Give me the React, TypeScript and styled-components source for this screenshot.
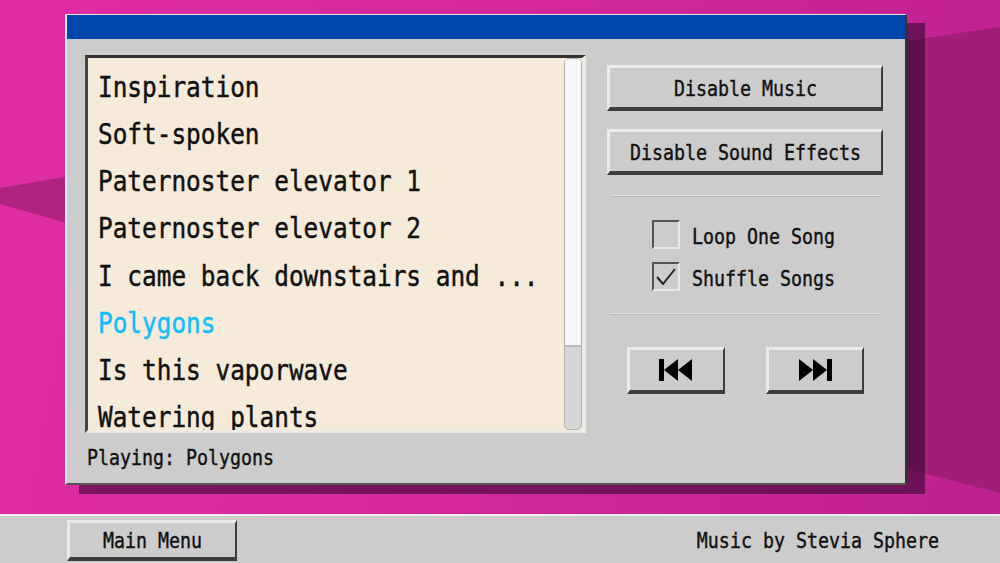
import React from 'react';
import styled, { createGlobalStyle, css } from 'styled-components';

const SONGS = [
  'Inspiration',
  'Soft-spoken',
  'Paternoster elevator 1',
  'Paternoster elevator 2',
  'I came back downstairs and ...',
  'Polygons',
  'Is this vaporwave',
  'Watering plants',
];
const PLAYING = 'Polygons';

const GlobalStyle = createGlobalStyle`
  html, body {
    margin: 0;
    padding: 0;
    height: 100%;
    overflow: hidden;
  }
  body {
    font-family: "DejaVu Sans Mono", "Liberation Mono", monospace;
    color: #111;
  }
`;

/* the game font is a tall pixel face, so stretch the mono a bit */
const tallText = css`
  display: inline-block;
  transform: scaleY(1.16);
  -webkit-text-stroke: 0.35px currentColor;
`;

const Page = styled.div`
  position: relative;
  display: flex;
  flex-direction: column;
  width: 1000px;
  height: 563px;
  overflow: hidden;
  background: linear-gradient(100deg, #e02da5 0%, #d2279b 55%, #bd2091 100%);
`;

const Backdrop = styled.svg`
  position: absolute;
  inset: 0;
  width: 1000px;
  height: 563px;
`;

const Stage = styled.main`
  position: relative;
  flex: 1;
  padding: 14px 93px 0 65px;
`;

const WinStack = styled.div`
  position: relative;
  z-index: 0;
`;

const Win = styled.section`
  position: relative;
  box-sizing: border-box;
  height: 471px;
  background: #ccc;
  border-top: 1px solid #e8e8e8;
  border-left: 2px solid #e8e8e8;
  border-right: 2px solid #333;
  border-bottom: 2px solid #555;

  &::after {
    content: '';
    position: absolute;
    left: 12px;
    right: -20px;
    top: 8px;
    bottom: -11px;
    background: rgba(40, 5, 40, 0.55);
    z-index: -1;
  }
`;

const TitleBar = styled.header`
  height: 24px;
  background: #0047ab;
`;

const WinBody = styled.div`
  display: grid;
  grid-template-columns: 501px 276px;
  column-gap: 21px;
  padding: 16px 0 0 18px;
`;

const LeftColumn = styled.div`
  display: flex;
  flex-direction: column;
`;

const ListFrame = styled.div`
  box-sizing: border-box;
  display: flex;
  height: 378px;
  background: #f6ead9;
  border-top: 3px solid #333;
  border-left: 3px solid #444;
  border-right: 4px solid #eeeae4;
  border-bottom: 3px solid #eeeae4;
`;

const SongList = styled.ul`
  flex: 1;
  margin: 0;
  padding: 6px 0 0 10px;
  list-style: none;
  overflow: hidden;
`;

const Song = styled.li<{ $active?: boolean }>`
  height: 47.15px;
  line-height: 47px;
  font-size: 24.4px;
  white-space: nowrap;
  color: ${({ $active }) => ($active ? '#12bdfb' : '#111')};
  transform: scaleY(1.16);
  -webkit-text-stroke: 0.4px currentColor;
`;

const Track = styled.div`
  box-sizing: border-box;
  width: 18px;
  background: #d6d6d6;
  border: 1px solid #b5b0a8;
  border-radius: 5px;
  overflow: hidden;
`;

const Thumb = styled.div`
  height: 286px;
  background: #f7f7f7;
  border-bottom: 2px solid #bbb;
`;

const Status = styled.p`
  margin: 14px 0 0 2px;
  font-size: 18.3px;
  line-height: 22px;
  transform: scaleY(1.16);
  -webkit-text-stroke: 0.35px currentColor;
`;

const Controls = styled.div`
  display: flex;
  flex-direction: column;
  padding-top: 10px;
`;

const RaisedButton = styled.button`
  box-sizing: border-box;
  display: flex;
  align-items: center;
  justify-content: center;
  padding: 0;
  background: #ccc;
  color: #111;
  font-family: inherit;
  font-size: 18.3px;
  border-style: solid;
  border-width: 3px 2px 4px 3px;
  border-color: #ebebeb #3c3c3c #3c3c3c #ebebeb;
`;

const ButtonLabel = styled.span`
  ${tallText}
  margin-top: 2px;
`;

const WideButton = styled(RaisedButton)`
  width: 276px;
  height: 46px;
  & + & {
    margin-top: 18px;
  }
`;

const Divider = styled.hr<{ $top: number }>`
  width: 270px;
  height: 1px;
  margin: ${({ $top }) => $top}px 0 0 4px;
  border: 0;
  background: #e2e2e2;
  box-shadow: 0 1px 0 #b8b8b8;
`;

const Options = styled.div`
  display: flex;
  flex-direction: column;
  gap: 13px;
  margin: 24px 0 0 45px;
`;

const Option = styled.label`
  display: flex;
  align-items: center;
  gap: 12px;
  font-size: 18.3px;
`;

const OptionText = styled.span`
  ${tallText}
  margin-top: 4px;
`;

const CheckBox = styled.span`
  box-sizing: border-box;
  display: flex;
  align-items: center;
  justify-content: center;
  width: 28px;
  height: 29px;
  border-style: solid;
  border-width: 2px;
  border-color: #555 #e8e8e8 #e8e8e8 #555;
`;

const Transport = styled.div`
  display: flex;
  gap: 41px;
  margin: 33px 0 0 20px;
`;

const TransportButton = styled(RaisedButton)`
  width: 98px;
  height: 47px;
  padding-right: 2px;
`;

const BottomBar = styled.footer`
  position: relative;
  box-sizing: border-box;
  display: flex;
  align-items: center;
  justify-content: space-between;
  height: 49px;
  padding: 1px 61px 0 67px;
  background: #ccc;
  border-top: 2px solid #eee;
`;

const MenuButton = styled(RaisedButton)`
  width: 170px;
  height: 41px;
`;

const Credit = styled.span`
  font-size: 18.3px;
  ${tallText}
`;

const PrevIcon = () => (
  <svg width="34" height="22" viewBox="0 0 34 22" fill="#000">
    <rect x="0" y="0" width="5" height="22" />
    <polygon points="5,11 19,0 19,22" />
    <polygon points="19,11 33,0 33,22" />
  </svg>
);

const NextIcon = () => (
  <svg width="34" height="22" viewBox="0 0 34 22" fill="#000">
    <polygon points="1,0 15,11 1,22" />
    <polygon points="15,0 29,11 15,22" />
    <rect x="29" y="0" width="5" height="22" />
  </svg>
);

const Tick = () => (
  <svg width="20" height="18" viewBox="0 0 20 18" fill="none" stroke="#222" strokeWidth="2">
    <path d="M1 9 L7 16 L19 1" />
  </svg>
);

export default function App() {
  return (
    <>
      <GlobalStyle />
      <Page>
        <Backdrop viewBox="0 0 1000 563">
          <polygon points="880,45 1000,27 1000,493 880,462" fill="#a01e78" />
          <polygon points="0,188 70,176 70,224 0,204" fill="#b0237f" />
        </Backdrop>
        <Stage>
          <WinStack>
            <Win>
              <TitleBar />
              <WinBody>
                <LeftColumn>
                  <ListFrame>
                    <SongList>
                      {SONGS.map((song) => (
                        <Song key={song} $active={song === PLAYING}>
                          {song}
                        </Song>
                      ))}
                    </SongList>
                    <Track>
                      <Thumb />
                    </Track>
                  </ListFrame>
                  <Status>Playing: {PLAYING}</Status>
                </LeftColumn>
                <Controls>
                  <WideButton>
                    <ButtonLabel>Disable Music</ButtonLabel>
                  </WideButton>
                  <WideButton>
                    <ButtonLabel>Disable Sound Effects</ButtonLabel>
                  </WideButton>
                  <Divider $top={20} />
                  <Options>
                    <Option>
                      <CheckBox />
                      <OptionText>Loop One Song</OptionText>
                    </Option>
                    <Option>
                      <CheckBox>
                        <Tick />
                      </CheckBox>
                      <OptionText>Shuffle Songs</OptionText>
                    </Option>
                  </Options>
                  <Divider $top={22} />
                  <Transport>
                    <TransportButton aria-label="Previous song">
                      <PrevIcon />
                    </TransportButton>
                    <TransportButton aria-label="Next song">
                      <NextIcon />
                    </TransportButton>
                  </Transport>
                </Controls>
              </WinBody>
            </Win>
          </WinStack>
        </Stage>
        <BottomBar>
          <MenuButton>
            <ButtonLabel>Main Menu</ButtonLabel>
          </MenuButton>
          <Credit>Music by Stevia Sphere</Credit>
        </BottomBar>
      </Page>
    </>
  );
}
